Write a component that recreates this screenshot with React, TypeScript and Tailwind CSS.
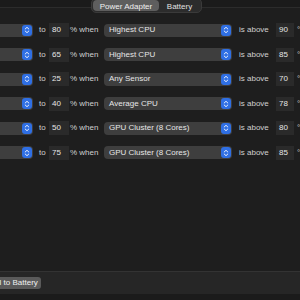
const rows = [
  { to: '80', sensor: 'Highest CPU', above: '90' },
  { to: '65', sensor: 'Highest CPU', above: '85' },
  { to: '25', sensor: 'Any Sensor', above: '70' },
  { to: '40', sensor: 'Average CPU', above: '78' },
  { to: '50', sensor: 'GPU Cluster (8 Cores)', above: '80' },
  { to: '75', sensor: 'GPU Cluster (8 Cores)', above: '85' },
];

function Stepper() {
  return (
    <span className="w-[10px] h-[11px] rounded-[3px] bg-[#2f6fe4] flex items-center justify-center shrink-0">
      <svg width="6" height="8" viewBox="0 0 6 8" fill="none">
        <path d="M1.2 3 L3 1.3 L4.8 3" stroke="white" strokeWidth="0.9" strokeLinecap="round" strokeLinejoin="round" />
        <path d="M1.2 5 L3 6.7 L4.8 5" stroke="white" strokeWidth="0.9" strokeLinecap="round" strokeLinejoin="round" />
      </svg>
    </span>
  );
}

function Popup({ label, className }: { label?: string; className: string }) {
  return (
    <div className={`h-[13px] rounded-[4px] bg-[#3e3e3e] flex items-center justify-between pl-[5px] pr-[1px] shrink-0 ${className}`}>
      <span className="text-[#e6e6e6] leading-none">{label}</span>
      <Stepper />
    </div>
  );
}

function Field({ value, className }: { value: string; className: string }) {
  return (
    <div className={`h-[14px] bg-[#2a2a2a] flex items-center pl-[3px] text-[#e6e6e6] leading-none shrink-0 ${className}`}>
      {value}
    </div>
  );
}

export default function App() {
  return (
    <div
      className="w-[300px] h-[300px] overflow-hidden relative bg-[#1e1e1e] flex flex-col text-[8px]"
      style={{ fontFamily: '"Liberation Sans", Arial, sans-serif' }}
    >
      {/* tab switcher sits over the box edge */}
      <div className="absolute left-[91px] top-[-2px] w-[111px] h-[15px] rounded-[5px] bg-[#2c2c2c] border border-[#3a3a3a] flex items-center p-[1px]">
        <div className="w-[66px] h-full rounded-[4px] bg-[#5e5e5e] flex items-center justify-center pt-[2px] text-[#f0f0f0]">
          Power Adapter
        </div>
        <div className="flex-1 flex items-center justify-center pt-[2px] text-[#e0e0e0]">Battery</div>
      </div>

      <div className="h-[8px] bg-[#1b1b1b] border-b border-[#2c2c2c] shrink-0" />

      <div className="flex-1 flex flex-col pt-[10px]">
        {rows.map((r, i) => (
          <div key={i} className="h-[24.5px] flex items-center ml-[-20px] whitespace-nowrap">
            <Popup className="w-[53px]" />
            <span className="w-[16px] pl-[6px] text-[#d0d0d0] shrink-0">to</span>
            <Field value={r.to} className="w-[20px]" />
            <span className="w-[35px] pl-[1px] text-[#d0d0d0] shrink-0">% when</span>
            <Popup label={r.sensor} className="w-[128px]" />
            <span className="w-[44px] pl-[7px] text-[#d0d0d0] shrink-0">is above</span>
            <Field value={r.above} className="w-[18px]" />
            <span className="pl-[3px] text-[#d0d0d0] shrink-0">°C</span>
          </div>
        ))}
      </div>

      <div className="h-[23px] bg-[#262626] border-t border-[#333333] flex items-center shrink-0">
        <div className="ml-[-34px] h-[12px] rounded-[3px] bg-[#5a5a5a] flex items-center pl-[6px] pr-[3px] text-[#f0f0f0] whitespace-nowrap">
          Copy All to Battery
        </div>
      </div>
      <div className="h-[6px] bg-[#1b1b1b] shrink-0" />
    </div>
  );
}
